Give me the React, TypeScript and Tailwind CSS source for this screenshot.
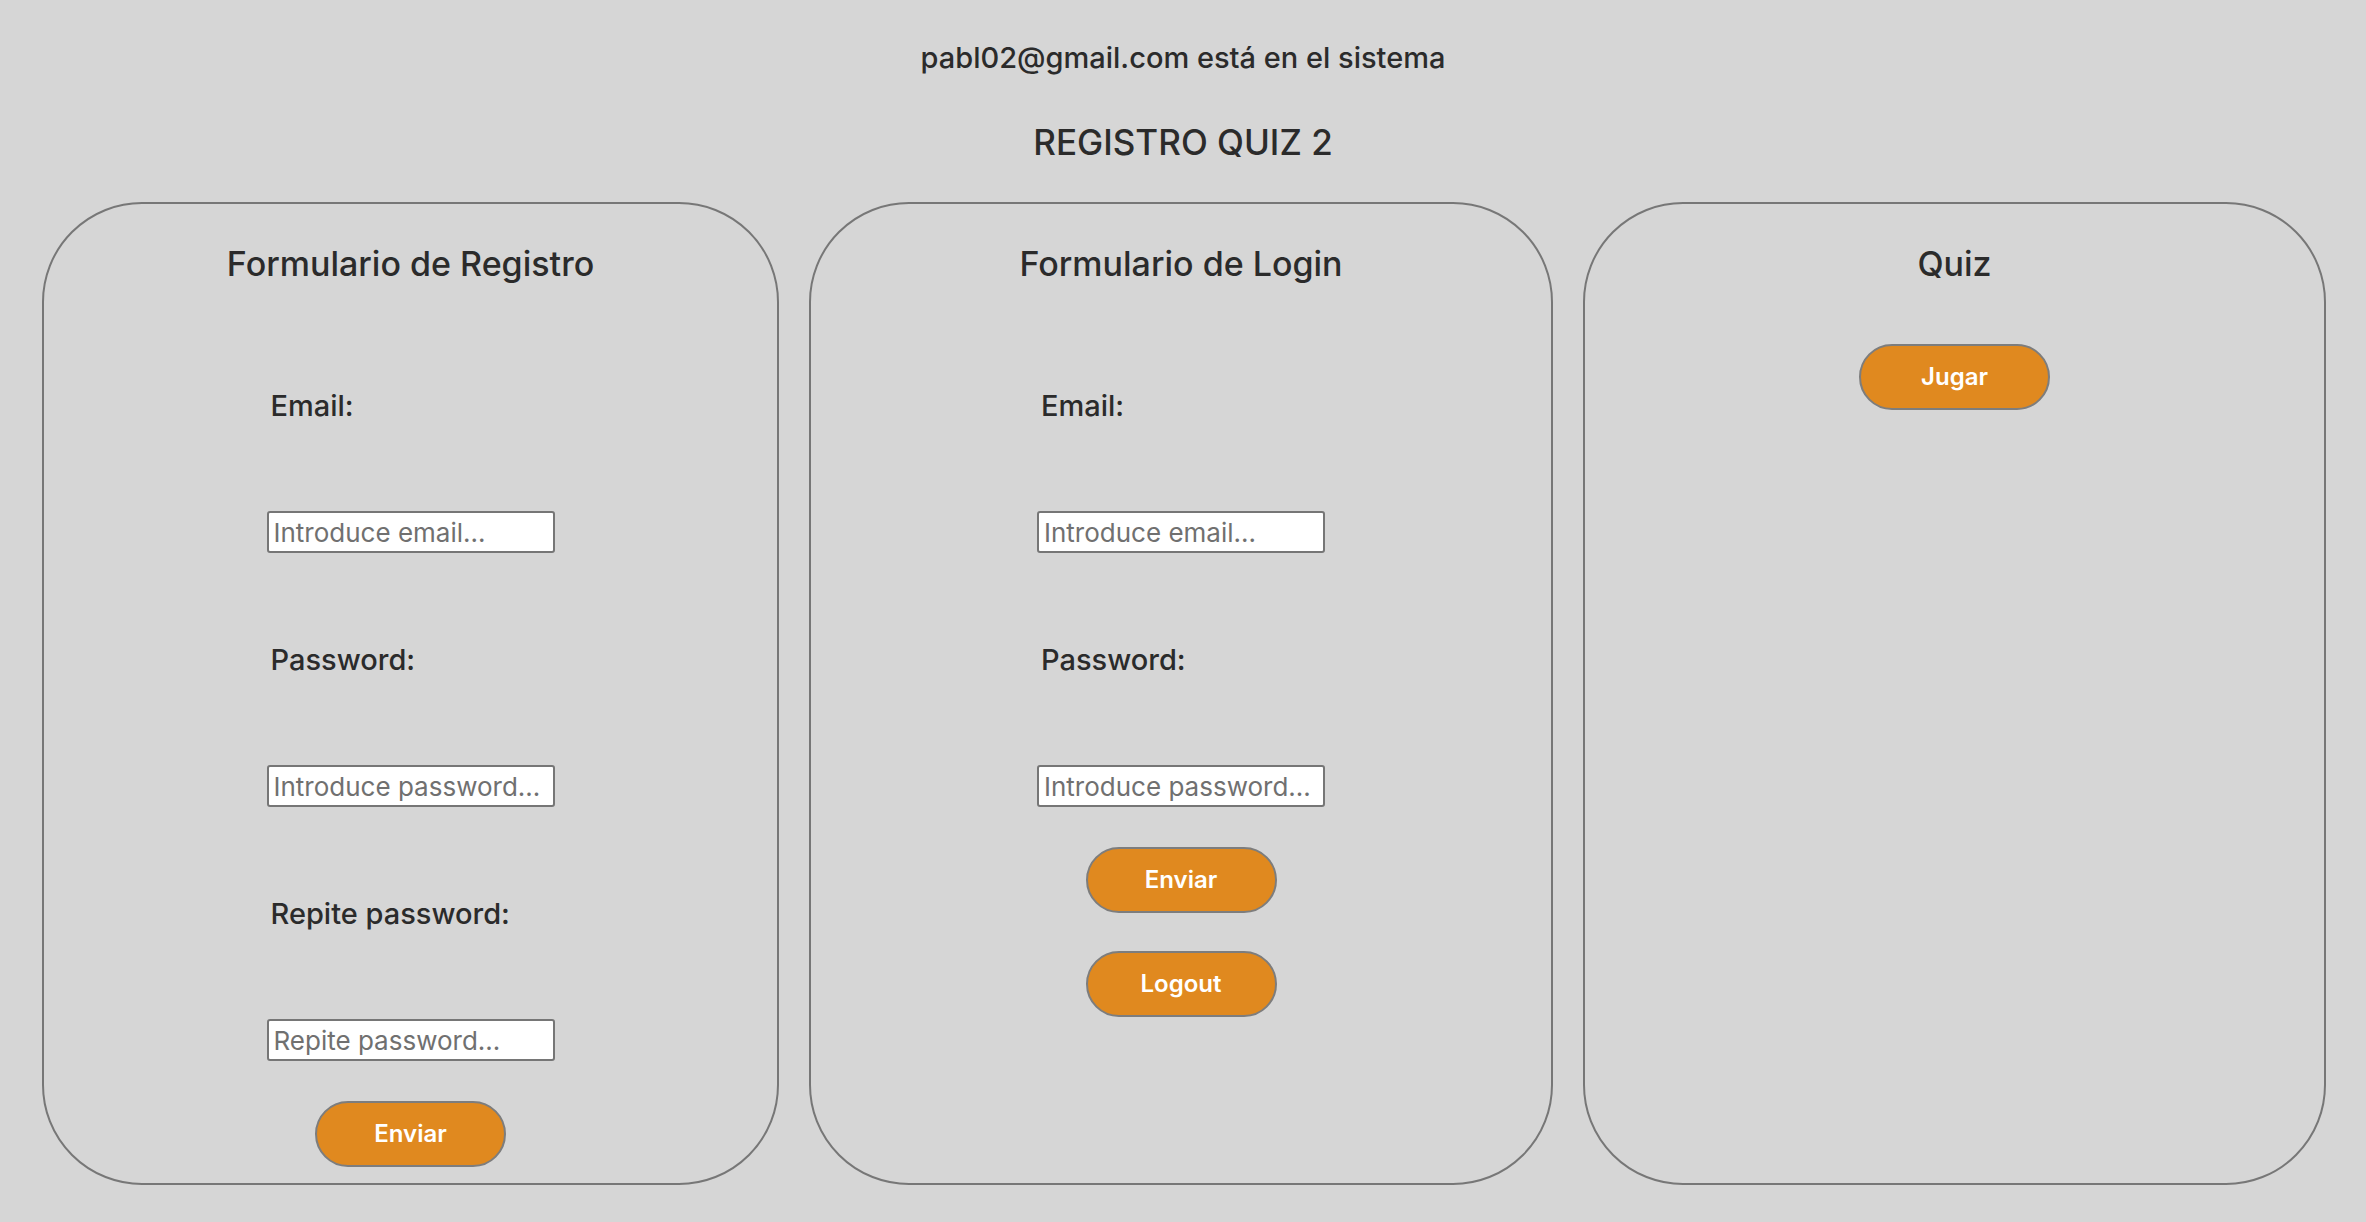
import React from 'react'

const font = { fontFamily: 'Inter, "Noto Sans", sans-serif' }

function Field({ label, placeholder, first }: { label: string; placeholder: string; first?: boolean }) {
  return (
    <div className={first ? 'mt-[104px] flex flex-col' : 'mt-[89px] flex flex-col'}>
      <label className="pl-1 text-[29px] leading-[36px] font-medium text-[#2b2b2b]">{label}</label>
      <input
        type="text"
        placeholder={placeholder}
        className="mt-[87px] h-[42px] w-[288px] rounded-[3px] border-2 border-[#767676] bg-white px-[5px] text-[26px] text-[#2b2b2b] placeholder:text-[#707070] outline-none"
      />
    </div>
  )
}

function OrangeButton({ children, className }: { children: React.ReactNode; className?: string }) {
  return (
    <button
      className={
        'h-[66px] w-[191px] rounded-full border-2 border-[#7d7d7d] bg-[#e0891f] text-[24px] font-semibold text-white ' +
        (className ?? '')
      }
    >
      {children}
    </button>
  )
}

function CardTitle({ children }: { children: React.ReactNode }) {
  return <h2 className="text-center text-[34px] leading-[40px] font-medium text-[#2b2b2b]">{children}</h2>
}

export default function App() {
  return (
    <div className="min-h-screen w-full bg-[#d6d6d6]" style={font}>
      <div className="flex flex-col items-center pt-[40px]">
        <p className="text-[29px] leading-[36px] font-medium text-[#2b2b2b]">pabl02@gmail.com está en el sistema</p>
        <h1 className="mt-[46px] text-[35px] leading-[40px] font-medium text-[#2b2b2b]">REGISTRO QUIZ 2</h1>
      </div>

      <div className="mt-[40px] flex items-stretch gap-[30px] pl-[42px]">
        <section className="flex w-[737px] flex-col items-center rounded-[100px] border-2 border-[#777777] pt-[40px] pb-[16px]">
          <CardTitle>Formulario de Registro</CardTitle>
          <div className="flex w-[288px] flex-col">
            <Field first label="Email:" placeholder="Introduce email..." />
            <Field label="Password:" placeholder="Introduce password..." />
            <Field label="Repite password:" placeholder="Repite password..." />
          </div>
          <OrangeButton className="mt-[40px]">Enviar</OrangeButton>
        </section>

        <section className="flex w-[744px] flex-col items-center rounded-[100px] border-2 border-[#777777] pt-[40px]">
          <CardTitle>Formulario de Login</CardTitle>
          <div className="flex w-[288px] flex-col">
            <Field first label="Email:" placeholder="Introduce email..." />
            <Field label="Password:" placeholder="Introduce password..." />
          </div>
          <OrangeButton className="mt-[40px]">Enviar</OrangeButton>
          <OrangeButton className="mt-[38px]">Logout</OrangeButton>
        </section>

        <section className="flex w-[743px] flex-col items-center rounded-[100px] border-2 border-[#777777] pt-[40px]">
          <CardTitle>Quiz</CardTitle>
          <OrangeButton className="mt-[60px]">Jugar</OrangeButton>
        </section>
      </div>
    </div>
  )
}
